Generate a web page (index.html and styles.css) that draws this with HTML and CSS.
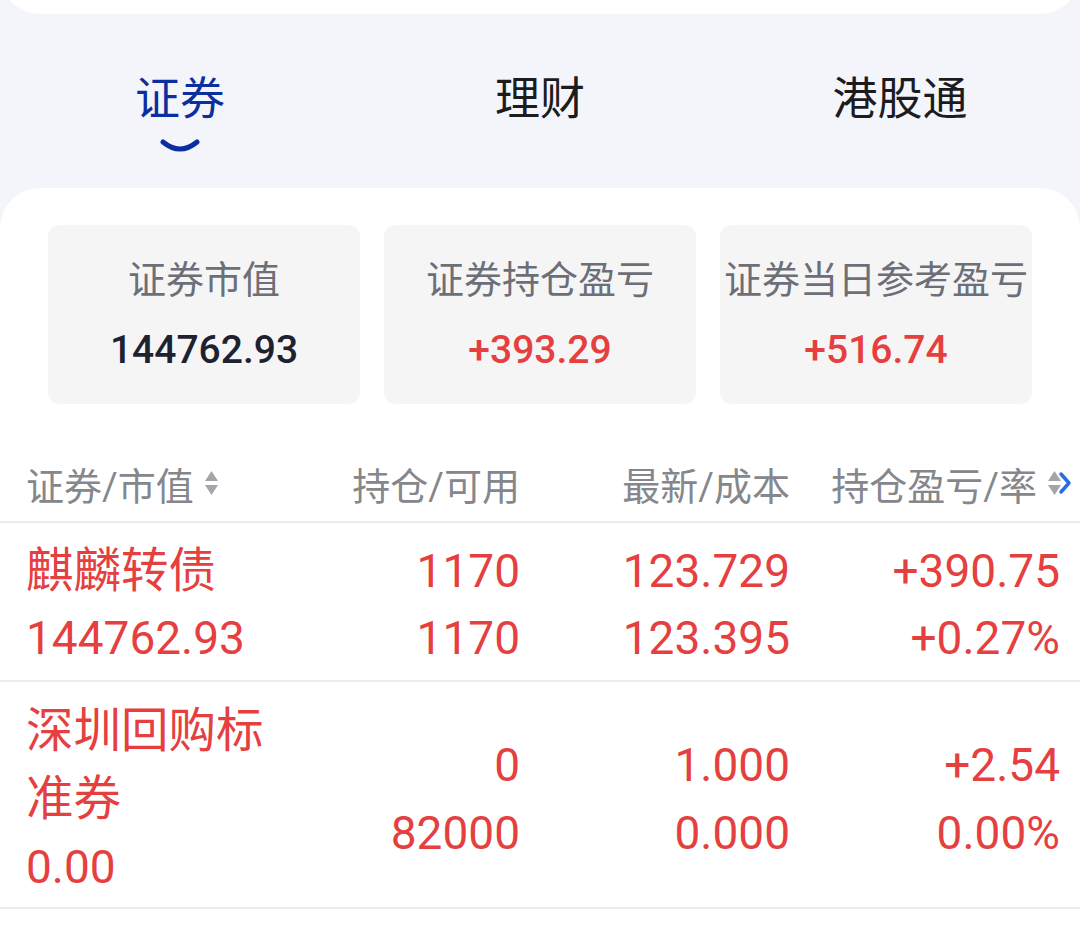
FILE: index.html
```html
<!DOCTYPE html>
<html lang="zh-CN">
<head>
  <meta charset="UTF-8">
  <meta name="viewport" content="width=device-width, initial-scale=1.0">
  <title>持仓</title>
  <link rel="stylesheet" href="styles.css">
</head>
<body>
  <div class="top-card"></div>

  <nav class="tabs">
    <div class="tab active">
      <span>证券</span>
      <svg class="smile" width="40" height="16" viewBox="0 0 40 16"><path d="M3 4 Q20 18 37 4" fill="none" stroke="#0b2fa0" stroke-width="5" stroke-linecap="round"/></svg>
    </div>
    <div class="tab"><span>理财</span></div>
    <div class="tab"><span>港股通</span></div>
  </nav>

  <section class="panel">
    <div class="summary">
      <div class="sum-card">
        <div class="sum-label">证券市值</div>
        <div class="sum-value">144762.93</div>
      </div>
      <div class="sum-card">
        <div class="sum-label">证券持仓盈亏</div>
        <div class="sum-value up">+393.29</div>
      </div>
      <div class="sum-card">
        <div class="sum-label">证券当日参考盈亏</div>
        <div class="sum-value up">+516.74</div>
      </div>
    </div>

    <div class="table-head">
      <div class="th first">证券/市值
        <svg class="sort" width="15" height="28" viewBox="0 0 15 28"><path d="M7.5 2 L14 12 H1 Z M1 16 H14 L7.5 26 Z" fill="#a3a5ab"/></svg>
      </div>
      <div class="th">持仓/可用</div>
      <div class="th">最新/成本</div>
      <div class="th">持仓盈亏/率
        <svg class="sort" width="15" height="28" viewBox="0 0 15 28"><path d="M7.5 2 L14 12 H1 Z M1 16 H14 L7.5 26 Z" fill="#a3a5ab"/></svg>
      </div>
      <svg class="more" width="14" height="24" viewBox="0 0 14 24"><path d="M3 3 L11 12 L3 21" fill="none" stroke="#2a6be6" stroke-width="3.5" stroke-linecap="round" stroke-linejoin="round"/></svg>
    </div>

    <div class="row">
      <div class="cell first">
        <div class="name">麒麟转债</div>
        <div>144762.93</div>
      </div>
      <div class="cell"><div>1170</div><div>1170</div></div>
      <div class="cell"><div>123.729</div><div>123.395</div></div>
      <div class="cell"><div>+390.75</div><div>+0.27%</div></div>
    </div>

    <div class="row">
      <div class="cell first">
        <div class="name">深圳回购标准券</div>
        <div>0.00</div>
      </div>
      <div class="cell"><div>0</div><div>82000</div></div>
      <div class="cell"><div>1.000</div><div>0.000</div></div>
      <div class="cell"><div>+2.54</div><div>0.00%</div></div>
    </div>
  </section>
</body>
</html>
```

FILE: styles.css
```css
body{
  margin: 0;
  background-color: #f3f5fa;
  font-family: Roboto, "Noto Sans CJK SC", sans-serif;
}
.top-card{
  height: 54px;
  margin-top: -40px;
  background: #fff;
  border-radius: 0 0 40px 40px;
}
.tabs{
  display: grid;
  grid-template-columns: repeat(3, 1fr);
  height: 174px;
}
.tab{
  display: flex;
  flex-direction: column;
  align-items: center;
  padding-top: 56px;
  font-size: 45px;
  line-height: 60px;
  color: #1c1c1e;
}
.tab.active{
  color: #0b2fa0;
}
.smile{
  margin-top: 8px;
}
.panel{
  background: #fff;
  border-radius: 40px 40px 0 0;
  padding-top: 37px;
  min-height: 725px;
}
.summary{
  display: flex;
  gap: 24px;
  padding: 0 48px;
}
.sum-card{
  flex: 1;
  height: 179px;
  box-sizing: border-box;
  padding-top: 30px;
  background: #f5f5f6;
  border-radius: 12px;
  text-align: center;
}
.sum-label{
  font-size: 38px;
  line-height: 50px;
  color: #6c6f77;
}
.sum-value{
  margin-top: 20px;
  font-size: 39px;
  line-height: 50px;
  font-weight: 500;
  color: #1e2230;
}
.up{
  color: #e53f3f;
}
.table-head,.row{
  display: grid;
  grid-template-columns: 254px 240px 270px 270px;
  padding: 0 20px 0 26px;
  border-bottom: 2px solid #ebebed;
}
.table-head{
  position: relative;
  margin-top: 41px;
  height: 76px;
  align-items: center;
  font-size: 38px;
  color: #85878c;
}
.th{
  display: flex;
  align-items: center;
  justify-content: flex-end;
}
.th.first{
  justify-content: flex-start;
}
.th .sort{
  margin-left: 10px;
}
.th:nth-child(4){
  margin-right: -2px;
}
.more{
  position: absolute;
  right: 8px;
  top: 26px;
}
.row{
  align-items: center;
  padding-top: 15px;
  padding-bottom: 8px;
  font-size: 46px;
  line-height: 67px;
  color: #e53f3f;
}
.row + .row{
  line-height: 68px;
  padding-bottom: 6px;
}
.cell{
  text-align: right;
}
.cell.first{
  text-align: left;
}
.name{
  font-size: 47.5px;
}
```
